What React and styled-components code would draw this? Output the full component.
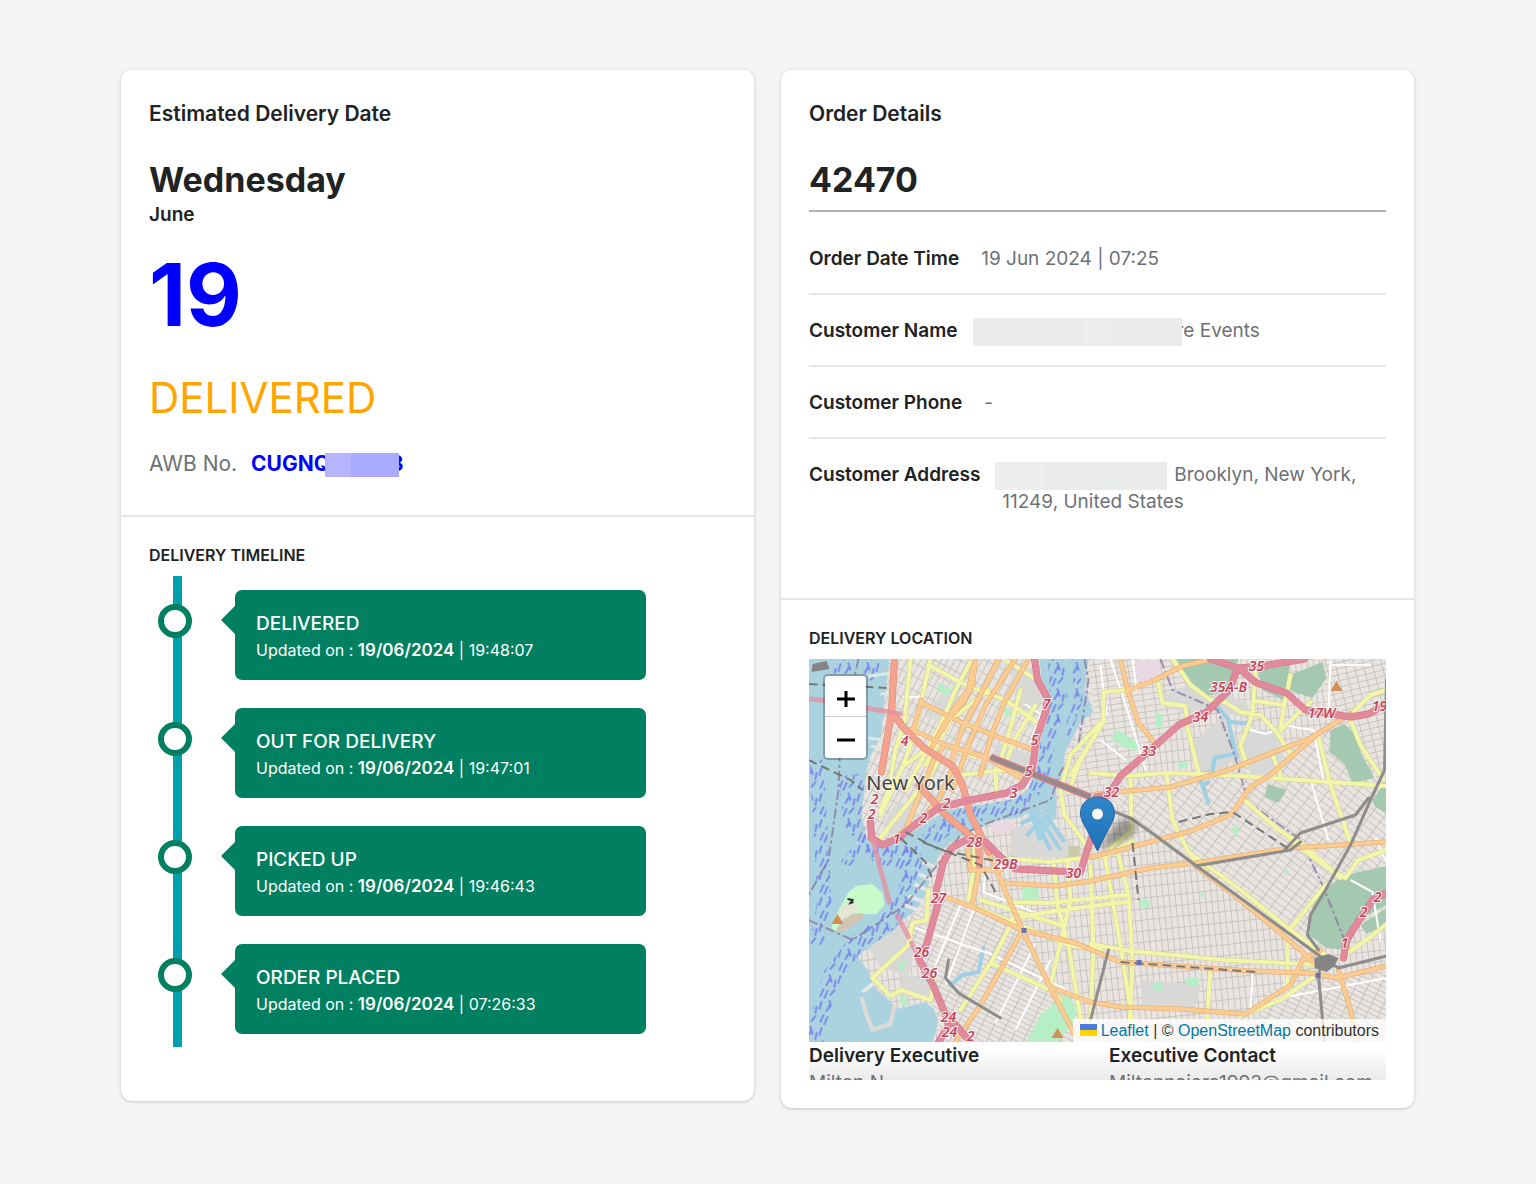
import React from 'react';
import styled, { createGlobalStyle } from 'styled-components';

const updates = [
    { status: 'DELIVERED', date: '19/06/2024', time: '19:48:07' },
    { status: 'OUT FOR DELIVERY', date: '19/06/2024', time: '19:47:01' },
    { status: 'PICKED UP', date: '19/06/2024', time: '19:46:43' },
    { status: 'ORDER PLACED', date: '19/06/2024', time: '07:26:33' },
];

// land outlines
const manhattan = 'M889 659 L884 700 881 735 870 756 866 772 864 790 861 815 866 838 874 846 888 846 905 836 922 826 944 811 975 806 1014 799 1028 789 1036 770 1040 740 1048 715 1051 697 1041 680 1039 659Z';
const brooklyn = 'M1088 659 L1084 690 1093 712 1080 722 1065 752 1062 772 1055 792 1056 820 1048 816 1042 810 1030 812 1018 818 1000 820 984 825 970 832 956 838 942 850 932 868 927 890 918 908 900 922 892 938 868 948 857 956 867 970 876 990 886 998 897 1009 925 1002 934 1010 938 1022 932 1042 1386 1042 1386 659Z';

const districts = [
    { fill: 'url(#gridA)', d: manhattan },
    { fill: 'url(#gridB)', d: 'M1088 659 L1230 659 1208 712 1150 750 1118 780 1056 800 1065 752 1093 712Z' },
    { fill: 'url(#gridC)', d: 'M1100 790 L1250 760 1386 700 1386 870 1310 955 1195 870Z' },
    { fill: 'url(#gridD)', d: 'M1000 820 L1060 820 1110 800 1195 870 1310 955 1250 1042 1100 1042 1090 960 1022 930Z' },
    { fill: 'url(#gridE)', d: 'M930 890 L1022 930 1085 1042 945 1042 915 960 905 925Z' },
    { fill: 'url(#gridE)', d: 'M1250 1042 L1270 990 1386 972 1386 1042Z' },
    { fill: 'url(#gridF)', d: 'M1320 659 L1386 659 1386 790 1330 720Z' },
];

const industry = [
    'M925 716 L942 691 960 696 948 725Z',
    'M1012 663 L1035 672 1044 700 1028 712 1010 690Z',
    'M996 742 L1032 756 1028 778 990 764Z',
    'M882 826 L896 802 914 806 918 818 892 836Z',
    'M1206 730 L1222 716 1235 735 1236 758 1222 768 1198 772 1190 745Z',
    'M1240 745 L1252 728 1275 735 1282 760 1268 776 1240 768Z',
    'M1162 695 L1200 680 1248 705 1245 718 1205 708 1178 712Z',
    'M1012 828 L1050 820 1074 846 1070 858 1008 856Z',
    'M868 948 L900 925 915 950 908 975 880 968Z',
    'M900 975 L930 980 936 1000 900 996Z',
    'M1140 980 L1200 985 1195 1008 1142 1004Z',
];

const parks = [
    'M1176 659 L1238 659 1229 690 1206 696 1188 679Z',
    'M1257 670 L1290 662 1283 700 1262 690Z',
    'M1292 674 L1322 662 1326 678 1312 698 1288 690Z',
    'M1330 730 L1344 724 1358 738 1360 752 1374 778 1352 783 1344 764 1329 752Z',
    'M1267 784 L1286 790 1278 803 1264 797Z',
    'M1372 800 L1386 780 1386 814 1374 806Z',
    'M1318 893 L1345 875 1386 866 1386 905 1362 918 1346 950 1326 948 1309 935 1311 910Z',
    'M1360 925 L1386 908 1386 924 1366 934Z',
];

const lawns = [
    'M1068 992 L1076 1012 1072 1024 1056 1042 1026 1042 1040 1015Z',
    'M938 683 L952 690 946 696 936 690Z',
    'M1110 737 L1118 730 1136 742 1138 750 1124 748Z',
    'M1002 706 L1012 712 1006 718Z',
    'M1022 886 h16 v14 h-16Z',
    'M896 965 L906 960 902 971Z',
    'M898 996 L908 998 904 1008Z',
    'M1186 978 h12 v8 h-12Z',
    'M1154 982 l9 3 -3 7 -9 -4Z',
    'M1140 899 l10 2 -1 7 -10 -2Z',
    'M1155 714 h7 v13 h-7Z',
    'M1198 895 l6 -4 -2 7Z',
    'M1282 868 l6 2 -3 5Z',
    'M1178 762 h9 v6 h-9Z',
    'M1230 829 l9 -4 -3 12Z',
];

const secondary = [
    'M910 659 L904 722 895 750 888 790 880 812',
    'M930 659 L921 700 915 730 903 765 880 815',
    'M928 665 L965 685 1005 700 1040 725',
    'M970 662 L955 690 940 725 905 790',
    'M988 690 L950 720 925 765',
    'M1003 659 L1040 682',
    'M1020 690 L1008 735 1000 760',
    'M1035 705 L1014 740 1007 758',
    'M905 765 L935 742 975 757',
    'M940 757 L925 782 894 820 880 838',
    'M960 775 L1002 770 1025 772',
    'M995 770 L996 792',
    'M1100 723 L1070 755 1060 790 1064 815 1088 848',
    'M1104 720 L1080 760 1068 792',
    'M1103 692 L1103 722 1070 775',
    'M1103 692 L1127 690',
    'M1158 684 L1162 703 1185 706 1187 727 1198 772',
    'M1172 659 L1190 685 1210 700 1224 702 1240 712 1260 715 1276 732 1292 757',
    'M1255 672 L1252 715 1240 745 1246 765',
    'M1290 675 L1282 715 1280 730 1310 702',
    'M1255 701 L1283 705',
    'M1090 773 L1125 776 1165 773 1200 774 1240 776 1300 780 1386 786',
    'M1318 737 L1330 785 1350 843',
    'M1348 715 L1360 745 1383 780',
    'M1351 714 L1370 695 1386 690',
    'M1271 752 L1280 775',
    'M1166 774 L1172 820 1188 852 1205 872',
    'M1130 778 L1131 830 1110 848',
    'M1245 801 L1278 830 1303 845 1340 878',
    'M1290 840 L1330 870 1345 878 1358 860 1386 850',
    'M1188 852 L1240 890 1290 930 1325 955',
    'M1325 885 L1305 910 1287 932 1287 985',
    'M975 840 L973 870 968 900',
    'M1000 858 L1050 862 1108 855 1132 840',
    'M970 905 L1022 926 1068 945 1100 950',
    'M1008 902 L1048 903 1125 895',
    'M1012 918 L1060 910 1125 902',
    'M1053 862 L1057 905 1068 945 1082 1030',
    'M1067 862 L1070 900 1050 985',
    'M1090 866 L1093 950 1090 1020',
    'M1104 855 L1112 900 1120 945 1133 1030',
    'M1118 855 L1128 895 1132 960 1129 1030',
    'M1090 944 L1130 951 1225 960 1320 965',
    'M1010 925 L992 960 960 1010',
    'M990 963 L1050 990 1060 1000',
    'M1210 968 L1206 1030',
    'M928 890 L926 920 912 923 908 945 872 978 890 996 900 990 930 1000 934 980',
    'M1240 1016 L1280 1000 1320 972',
    'M1340 958 L1370 937 1386 924',
    'M1060 925 L980 900',
];

const primary = [
    'M1015 659 L985 705 968 745 952 790',
    'M1028 659 L1004 702 990 738 980 775',
    'M998 659 L980 695 962 728 951 760',
    'M975 659 L972 685 963 702 945 722 930 750',
    'M973 665 L968 690 955 706 942 730',
    'M922 703 L960 722 1000 738 1034 750',
    'M910 729 L945 745 985 757 1022 779',
    'M921 700 L912 733',
    'M945 745 L934 758 905 830 885 845 875 840',
    'M952 768 L938 800 912 828',
    'M1120 659 L1127 690 1138 723 1155 744',
    'M1127 690 L1150 682 1182 666 1208 660',
    'M1096 794 L1170 787 1225 771 1310 738 1350 714',
    'M1316 735 L1290 757 1270 775 1250 787 1230 815 1190 831 1120 850 1090 857',
    'M1003 883 L1055 886 1090 881 1150 868 1195 863 1290 848 1386 842',
    'M944 897 L972 907 1022 930 1075 943 1120 962 1250 971 1310 973 1336 978 1386 966',
    'M978 835 L979 868 972 903',
    'M967 848 L970 870 1000 870',
    'M988 852 L1000 880 1022 930 1050 988 1075 1036',
    'M1022 930 L1000 970 980 1005 955 1042',
    'M1052 988 L1090 1002 1120 1007 1180 1009 1245 1014 1290 985 1302 960 1320 950',
    'M1338 970 L1350 1010 1356 1042',
    'M1195 866 L1240 900 1300 950 1312 962',
];

const trunk = [
    'M894 659 L891 712 881 772',
    'M891 712 L905 730 925 749 952 766 962 785 970 815 984 842 988 852',
    'M918 785 L945 815 975 840',
    'M978 842 L979 865',
];

const motorway = [
    'M1034 659 L1037 680 1047 698 1045 712 1036 738 1032 768 1022 785 1006 793 965 801 938 808 918 822 898 838 882 845 871 838 870 822',
    'M1210 659 L1237 668 1229 690 1206 712 1178 725 1150 750 1120 776 1108 795 1096 797 1090 812 1092 835 1086 852 1080 872 1055 871 1015 869 1000 857 985 842 965 840 951 848 943 862 936 890 937 905 926 945 918 958 932 984 944 1012 970 1042',
    'M1304 659 L1262 666 1238 668 1256 683 1286 693 1305 710 1350 717 1368 714 1386 704',
    'M944 1012 L948 1026 938 1042',
    'M1343 958 L1346 940 1362 915 1373 899 1386 893',
];

const tunnels = [
    'M808 699 L830 701 M866 708 L900 714',
    'M872 838 L880 870 889 902 M897 916 L908 937 M911 943 L918 956',
];

const rails = [
    'M1112 811 L1130 818 1150 832 1200 869 1322 958',
    'M1195 866 L1290 850 1300 842',
    'M1322 958 L1318 975 1324 1042',
    'M1322 958 L1338 968 1386 956',
    'M1386 680 L1384 770 1370 800 1350 845 1325 890 1310 915 1307 935 1318 950',
    'M1284 850 L1300 833 1355 815 1368 798',
    'M948 960 L945 978 958 993 1000 1018',
    'M1108 950 L1090 1020',
];

const dashedRails = [
    'M1178 822 L1210 814 1232 812 1290 850',
    'M922 842 L980 865 995 892',
    'M808 684 L886 688',
    'M808 760 L850 780 862 790',
    'M1132 843 L1138 900',
    'M1120 962 L1255 972',
    'M900 838 L925 862 932 880',
    'M905 832 L940 850 1000 862',
];

const boundaries = [
    'M858 659 L840 735 838 790 828 860 808 895',
    'M1084 659 L1088 680 1078 745 1060 772 1050 800 985 824 960 835 925 880 905 905 852 940 808 920',
    'M1160 659 L1172 690 1200 702 1217 710 1234 755 1245 793',
    'M1245 800 L1300 840 1322 885 1344 940',
];

const creeks = [
    'M1216 706 L1230 722 1250 724 M1228 722 L1236 758',
    'M1233 754 L1214 758 1212 772 1198 774 1208 803 M1202 786 L1208 782',
    'M983 948 L978 972 962 975 950 985',
];

const ferries = [
    { d: 'M814 1042 L822 1005 832 975 855 945 885 925 905 900 912 870 912 846', width: 18 },
    { d: 'M835 665 L850 672 M872 659 L868 680', width: 16 },
    { d: 'M1056 659 L1058 700 1046 745 1040 780 1018 806 965 815 925 840', width: 17 },
    { d: 'M1075 659 L1078 700 1066 735', width: 8 },
    { d: 'M850 775 L855 820 880 852 910 860', width: 24 },
    { d: 'M816 760 L820 830 824 900 816 945', width: 14 },
    { d: 'M845 865 L870 835', width: 12 },
];

const exits = [
    ['7', 1046, 709], ['5', 1034, 745], ['5', 1028, 776], ['3', 1013, 798], ['2', 946, 808],
    ['2', 923, 823], ['4', 904, 746], ['2', 874, 804], ['2', 871, 819], ['1', 896, 844],
    ['28', 974, 847], ['29B', 1005, 869], ['30', 1073, 878], ['27', 938, 903], ['26', 921, 957],
    ['26', 929, 978], ['24', 948, 1022], ['24', 949, 1037], ['2', 970, 1041], ['32', 1111, 797],
    ['33', 1148, 756], ['34', 1200, 722], ['35A-B', 1228, 692], ['35', 1256, 671],
    ['17W', 1321, 718], ['19', 1379, 711], ['2', 1377, 902], ['2', 1363, 917], ['1', 1344, 948],
];

const peaks = [[1336, 691], [837, 924], [1057, 1038]];
const stations = [[1023, 930], [1138, 962], [1317, 975]];

function Lines({ paths, color, casing, width }) {
    const all = paths.join(' ');
    return (
        <g fill="none" strokeLinejoin="round" strokeLinecap="round">
            {casing && <path d={all} stroke={casing} strokeWidth={width + 1} />}
            <path d={all} stroke={color} strokeWidth={width} />
        </g>
    );
}

function StreetGrid({ id, angle, w, h }) {
    return (
        <pattern id={id} width={w} height={h} patternUnits="userSpaceOnUse" patternTransform={`rotate(${angle})`}>
            <rect width={w} height={h} fill="#e9e4df" />
            <path d={`M0 0 H${w} M0 0 V${h}`} stroke="#bfbdbc" strokeWidth="1.6" />
        </pattern>
    );
}

function CityMap() {
    return (
        <MapSvg viewBox="808 659 578 383" preserveAspectRatio="xMidYMid slice" role="img" aria-label="Map of New York">
            <defs>
                <StreetGrid id="gridA" angle={28} w={6} h={12} />
                <StreetGrid id="gridB" angle={-8} w={11} h={6} />
                <StreetGrid id="gridC" angle={37} w={12} h={6} />
                <StreetGrid id="gridD" angle={-6} w={6} h={11} />
                <StreetGrid id="gridE" angle={26} w={11} h={5} />
                <StreetGrid id="gridF" angle={-14} w={9} h={6} />
                <pattern id="ferry" width="19" height="26" patternUnits="userSpaceOnUse">
                    <path
                        d="M3 8 L6 1 M7 10 L10 3 M13 7 L17 2 M2 21 L4 14 M9 23 L13 16 M14 20 L12 13 M17 25 L18 19"
                        stroke="#7581f0"
                        strokeWidth="1.8"
                        strokeLinecap="round"
                    />
                </pattern>
                <linearGradient id="pin" x1="0" y1="0" x2="0" y2="1">
                    <stop offset="0" stopColor="#2f86cb" />
                    <stop offset="1" stopColor="#1f72b8" />
                </linearGradient>
                <filter id="soft"><feGaussianBlur stdDeviation="3" /></filter>
            </defs>
            <rect x="808" y="659" width="578" height="383" fill="#aad3df" />
            <g fill="none" stroke="url(#ferry)">
                {ferries.map((f) => <path key={f.d} d={f.d} strokeWidth={f.width} />)}
            </g>
            <path d={brooklyn} fill="url(#gridD)" />
            {districts.map((area, i) => <path key={i} d={area.d} fill={area.fill} />)}
            <path d={industry.join(' ')} fill="#d8d8d7" />
            <path d="M1135 662 L1158 660 1162 676 1145 686 1136 676Z M990 824 L1012 820 1016 828 995 836Z" fill="#e9d8e2" />
            <path d={parks.join(' ')} fill="#a5c9b0" />
            <path d={lawns.join(' ')} fill="#b6efc6" />

            {/* navy yard basins, gowanus bay piers */}
            <path d="M1028 809 L1050 812 1050 825 1038 842Z" fill="#aad3df" />
            <path d="M1030 812 L1040 840 M1036 815 L1020 824 M1040 820 L1026 836 M1042 822 L1060 850 M1046 816 L1064 842 M1040 830 L1050 850" stroke="#9fd0e6" strokeWidth="4" />
            <path d="M1068 846 h11 v12 h-11Z" fill="#c9c9a8" />
            <path d="M861 997 L865 1012 872 1030 890 1024 894 1006" fill="none" stroke="#dedbd7" strokeWidth="4" />
            <path d="M904 905 l16 6 M908 896 l16 6 M914 884 l12 6 M918 874 l12 5 M922 862 l12 5 M862 992 l18 -14" stroke="#e8e6e4" strokeWidth="4" />
            <path d="M868 676 l24 -3 M868 738 l16 2 M870 746 l14 3 M880 694 h10" stroke="#dfe9e0" strokeWidth="3" />
            <path d="M831 927 L838 910 848 892 856 886 872 884 882 893 884 905 876 914 862 914 846 930 834 932Z" fill="#c8facc" />
            <path d="M834 932 L846 914 862 913 864 918 842 932Z" fill="#cfc6b4" />
            <path d="M833 921 L842 906 850 900 860 908 846 918Z" fill="#e3e6d2" />
            <path d="M847 899 l5 1 -2 3 3 -1" stroke="#333" strokeWidth="2" fill="none" />

            <Lines paths={creeks} color="#9fcfe2" width={4} />
            <g fill="none" stroke="#8a7ca3" strokeWidth="2" strokeDasharray="10 3 3 3" opacity=".8">
                <path d={boundaries.join(' ')} />
            </g>

            <g fill="none" stroke="#fff" strokeWidth="2">
                <path d="M1110 659 L1130 720 1145 770 M1100 665 L1106 715 M1132 659 L1136 690 M900 737 h22 M902 697 h22 M1024 704 l16 10 -9 24 M1250 730 l15 4 22 -8 26 4 10 50 M1330 660 l-2 55 M1330 665 h40 M985 870 l-2 22 60 24 M915 928 l75 26 75 35 M960 905 l-25 60 M975 905 l-30 80 M1035 943 l-40 80 M1050 960 l-35 70 M1090 905 l40 -5 M1252 970 l-2 45 M1270 1000 l116 -22 M1290 930 l-6 60 M1100 740 l25 20 M1310 780 l18 60 M1350 880 l22 12 8 50 M1385 860 l-10 -22" />
            </g>

            <Lines paths={secondary} color="#f3f6a9" casing="#cdd19c" width={4} />
            <Lines paths={primary} color="#fbcb92" casing="#dcaa6c" width={4} />
            <Lines paths={trunk} color="#f4a48e" casing="#d88772" width={6} />
            <Lines paths={motorway} color="#e08a9b" casing="#d37388" width={6} />
            <g opacity=".75"><Lines paths={tunnels} color="#e68f9f" width={5} /></g>
            <Lines paths={rails} color="#8f8d8c" width={3} />
            <g fill="none" stroke="#777" strokeWidth="2" strokeDasharray="9 5"><path d={dashedRails.join(' ')} /></g>
            <path d="M990 757 L1040 777 1090 797" stroke="#d77b8b" strokeWidth="7" fill="none" />
            <path d="M990 757 L1040 777 1090 797" stroke="#8f8d8c" strokeWidth="4" fill="none" />
            <path d="M1314 958 l14 -4 10 4 -4 8 -8 6 -12 -4Z M812 664 l14 -3 3 8 -18 3Z" fill="#858585" />

            {stations.map(([x, y]) => <rect key={x} x={x - 2} y={y - 2} width="5" height="5" fill="#6a70b5" />)}
            {peaks.map(([x, y]) => <path key={x} d={`M${x} ${y - 10} l6 10 h-12Z`} fill="#d08f55" />)}
            <ExitLabels>
                {exits.map(([name, x, y], i) => <text key={i} x={x} y={y}>{name}</text>)}
            </ExitLabels>
            <CityLabel x="910" y="790">New York</CityLabel>

            <path d="M1098 850 L1112 828 Q1124 814 1134 822 Q1140 832 1124 840Z" fill="#000" opacity=".35" filter="url(#soft)" />
            <path
                d="M1097 797 C1087 797 1080 804 1080 813 C1080 819 1083 824 1086 829 L1097 851 L1108 829 C1111 824 1114 819 1114 813 C1114 804 1107 797 1097 797Z"
                fill="url(#pin)"
                stroke="#2a6699"
            />
            <circle cx="1097" cy="814" r="6" fill="#fff" stroke="#2b6fa8" />
        </MapSvg>
    );
}

function App() {
    return (
        <>
            <GlobalStyle />
            <Page>
                <Card>
                    <Section>
                        <CardTitle>Estimated Delivery Date</CardTitle>
                        <Headline>Wednesday</Headline>
                        <Month>June</Month>
                        <Day>19</Day>
                        <Status>DELIVERED</Status>
                        <Awb>
                            AWB No. <strong>CUGNQ<Redacted $tone="blue" $width={74} />3</strong>
                        </Awb>
                    </Section>
                    <Section $divided>
                        <SectionTitle>DELIVERY TIMELINE</SectionTitle>
                        <Timeline>
                            {updates.map((u) => (
                                <TimelineItem key={u.status}>
                                    <Dot />
                                    <Bubble>
                                        <h4>{u.status}</h4>
                                        <p>Updated on : <b>{u.date}</b> | {u.time}</p>
                                    </Bubble>
                                </TimelineItem>
                            ))}
                        </Timeline>
                    </Section>
                </Card>
                <Card>
                    <OrderSection>
                        <CardTitle>Order Details</CardTitle>
                        <Headline>42470</Headline>
                        <Details>
                            <div>
                                <dt>Order Date Time</dt>
                                <dd>19 Jun 2024 | 07:25</dd>
                            </div>
                            <div>
                                <dt>Customer Name</dt>
                                <dd><Redacted $width={209} $lead />re Events</dd>
                            </div>
                            <div>
                                <dt>Customer Phone</dt>
                                <dd>-</dd>
                            </div>
                            <div>
                                <dt>Customer Address</dt>
                                <dd><Redacted $width={172} $lead $gap />Brooklyn, New York, 11249, United States</dd>
                            </div>
                        </Details>
                    </OrderSection>
                    <Section $divided>
                        <SectionTitle>DELIVERY LOCATION</SectionTitle>
                        <ScrollArea>
                            <MapBox>
                                <CityMap />
                                <ZoomControl>
                                    <button type="button" aria-label="Zoom in">
                                        <svg width="18" height="18" viewBox="0 0 18 18"><path d="M9 1v16M0 9h18" /></svg>
                                    </button>
                                    <button type="button" aria-label="Zoom out">
                                        <svg width="18" height="18" viewBox="0 0 18 18"><path d="M0 9h18" /></svg>
                                    </button>
                                </ZoomControl>
                                <Attribution>
                                    <svg width="17" height="12" viewBox="0 0 17 12">
                                        <path fill="#4c7be1" d="M0 0h17v6H0z" />
                                        <path fill="#ffd500" d="M0 6h17v6H0z" />
                                    </svg>
                                    <a href="#leaflet">Leaflet</a> | © <a href="#osm">OpenStreetMap</a> contributors
                                </Attribution>
                            </MapBox>
                            <Contacts>
                                <div>
                                    <dt>Delivery Executive</dt>
                                    <dd>Milton N</dd>
                                </div>
                                <div>
                                    <dt>Executive Contact</dt>
                                    <dd>Miltonnajera1993@gmail.com</dd>
                                </div>
                            </Contacts>
                        </ScrollArea>
                    </Section>
                </Card>
            </Page>
        </>
    );
}

const GlobalStyle = createGlobalStyle`
    * {
        box-sizing: border-box;
    }
    body {
        margin: 0;
        background: #f5f5f5;
        color: #202223;
        font-family: Inter, "Liberation Sans", sans-serif;
    }
    h1, h2, h3, h4, p, dl, dd, ol {
        margin: 0;
        padding: 0;
    }
`;

const Page = styled.main`
    display: grid;
    grid-template-columns: repeat(2, minmax(0, 1fr));
    align-items: start;
    gap: 27px;
    padding: 70px 122px 70px 121px;
`;

const Card = styled.section`
    background: #fff;
    border-radius: 11px;
    box-shadow: 0 0 6px rgba(23, 24, 24, 0.06), 0 1px 3px rgba(0, 0, 0, 0.16);
`;

const Section = styled.div`
    padding: 28px;
    border-top: ${(p) => (p.$divided ? '2px solid #e4e5e7' : 'none')};
`;

const OrderSection = styled(Section)`
    padding-bottom: 62px;
`;

const CardTitle = styled.h2`
    font-size: 21px;
    line-height: 32px;
    font-weight: 600;
`;

const Headline = styled.h1`
    margin-top: 28px;
    font-size: 34px;
    line-height: 44px;
    font-weight: 700;
`;

const Month = styled.h3`
    font-size: 19px;
    line-height: 26px;
    font-weight: 600;
`;

const Day = styled.p`
    margin-top: 16px;
    color: #00f;
    font-size: 86px;
    line-height: 102px;
    font-weight: 700;
`;

const Status = styled.p`
    margin-top: 24px;
    color: orange;
    font-size: 42px;
    line-height: 56px;
`;

const Awb = styled.p`
    margin-top: 20px;
    margin-bottom: 5px;
    color: #6d7175;
    font-size: 21px;
    line-height: 36px;

    strong {
        margin-left: 8px;
        color: #00f;
        font-weight: 700;
    }
`;

const Redacted = styled.span`
    display: inline-block;
    position: relative;
    vertical-align: middle;
    width: ${(p) => p.$width}px;
    height: ${(p) => (p.$tone === 'blue' ? 24 : 28)}px;
    margin: -4px ${(p) => (p.$gap ? 7 : p.$lead ? -5 : -9)}px -4px ${(p) => (p.$lead ? -7 : -5)}px;
    background: ${(p) => (p.$tone === 'blue'
        ? 'linear-gradient(90deg, #b5b5ff 35%, #aaaaff 35%)'
        : p.$gap
            ? 'linear-gradient(90deg, #eeeeee 28%, #eaecec 28%)'
            : 'linear-gradient(90deg, #eaecec 52%, #eeeeee 52%, #eeeeee 67%, #eaecec 67%)')};
`;

const SectionTitle = styled.h3`
    font-size: 16px;
    line-height: 21px;
    font-weight: 600;
`;

const Timeline = styled.ol`
    display: flex;
    flex-direction: column;
    gap: 28px;
    margin: 10px 0 26px;
    padding: 14px 0 13px 9px;
    list-style: none;
    background: linear-gradient(#00a0ac, #00a0ac) 24px 0 / 9px 100% no-repeat;
`;

const TimelineItem = styled.li`
    display: flex;
    gap: 43px;
    height: 90px;
`;

const Dot = styled.span`
    flex: none;
    width: 34px;
    height: 34px;
    margin-top: 14px;
    border: 6px solid #008060;
    border-radius: 50%;
    background: #fff;
`;

const Bubble = styled.div`
    position: relative;
    flex: 0 1 411px;
    padding: 21px;
    border-radius: 7px;
    background: #008060;
    color: #fff;

    &::before {
        content: '';
        position: absolute;
        top: 16px;
        right: 100%;
        border: 14px solid transparent;
        border-left: 0;
        border-right-color: #008060;
    }

    h4 {
        font-size: 19px;
        line-height: 26px;
        font-weight: 500;
    }

    p {
        font-size: 16px;
        line-height: 26px;
    }

    b {
        font-size: 17px;
        font-weight: 600;
    }
`;

const Details = styled.dl`
    margin-top: 8px;
    padding-top: 11px;
    border-top: 2px solid #b0b1b2;
    font-size: 19px;
    line-height: 27px;

    div {
        display: flex;
        gap: 22px;
        padding: 22px 0 21px;
        border-bottom: 2px solid #e8e9e9;
    }

    div:last-child {
        border-bottom: 0;
    }

    dt {
        flex: none;
        font-weight: 600;
    }

    dd {
        color: #6d7175;
    }
`;

const ScrollArea = styled.div`
    height: 421px;
    margin-top: 10px;
    overflow: hidden;
`;

const MapBox = styled.div`
    position: relative;
    height: 383px;
`;

const MapSvg = styled.svg`
    display: block;
    width: 100%;
    height: 100%;
`;

const ExitLabels = styled.g`
    fill: #c0455c;
    stroke: #fff;
    stroke-width: 2px;
    stroke-opacity: 0.8;
    paint-order: stroke;
    font: italic 600 14px "Noto Sans", sans-serif;
    text-anchor: middle;
`;

const CityLabel = styled.text`
    fill: #444;
    stroke: #fff;
    stroke-width: 2px;
    stroke-opacity: 0.6;
    paint-order: stroke;
    font: 20px "Noto Sans", sans-serif;
    text-anchor: middle;
`;

const ZoomControl = styled.div`
    position: absolute;
    top: 15px;
    left: 14px;
    display: flex;
    flex-direction: column;
    border: 2px solid rgba(0, 0, 0, 0.25);
    border-radius: 5px;
    background-clip: padding-box;

    button {
        display: grid;
        place-items: center;
        width: 41px;
        height: 41px;
        padding: 5px 0 0;
        border: 0;
        background: #fff;
    }

    button:first-child {
        border-bottom: 1px solid #ccc;
        border-radius: 3px 3px 0 0;
    }

    button:last-child {
        border-radius: 0 0 3px 3px;
    }

    svg {
        stroke: #000;
        stroke-width: 3;
    }
`;

const Attribution = styled.div`
    position: absolute;
    right: 0;
    bottom: 0;
    padding: 0 7px;
    background: rgba(255, 255, 255, 0.8);
    color: #333;
    font: 16px/23px "Liberation Sans", sans-serif;
    white-space: nowrap;

    svg {
        margin-right: 4px;
    }

    a {
        color: #0078a8;
        text-decoration: none;
    }
`;

const Contacts = styled.dl`
    display: grid;
    grid-template-columns: 52fr 48fr;
    height: 38px;
    overflow: hidden;
    background: linear-gradient(#fff 20%, #eaeaea);
    font-size: 19px;
    line-height: 27px;

    dt {
        font-weight: 600;
    }

    dd {
        color: #6d7175;
    }
`;

export default App;
